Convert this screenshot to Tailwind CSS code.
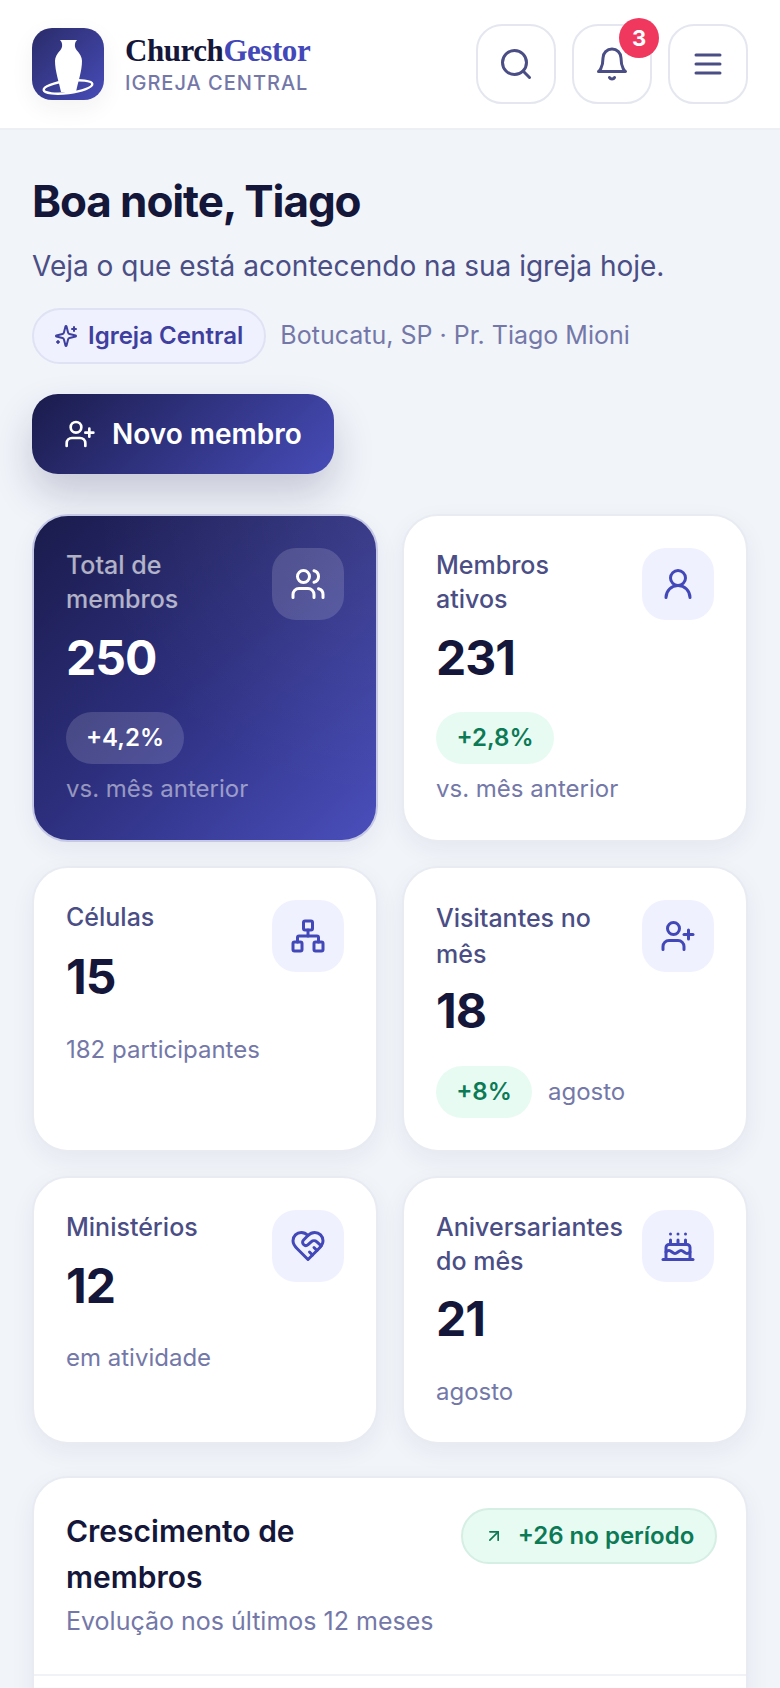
<!DOCTYPE html>
<html lang="pt-BR">
<head>
    <meta charset="UTF-8">
    <meta name="viewport" content="width=device-width, initial-scale=1.0">
    <title>ChurchGestor</title>
    <script src="https://cdn.jsdelivr.net/npm/@tailwindcss/browser@4"></script>
</head>
<body class="bg-[#f1f4f9] font-['Inter',sans-serif] text-[#14163a]">
<div class="h-[1688px] overflow-hidden">
    <!-- Header -->
    <header class="h-[130px] bg-white border-b-2 border-[#eceff4] px-8 flex items-center justify-between">
        <div class="flex items-center gap-[21px]">
            <div class="w-[72px] h-[72px] rounded-[20px] bg-[linear-gradient(135deg,#2a2b69,#474cb8)] shadow-[0_8px_24px_rgba(26,27,75,0.06)]">
                <svg viewBox="0 0 72 72" class="w-[72px] h-[72px]">
                    <ellipse cx="36" cy="59" rx="24.5" ry="6" transform="rotate(-7 36 59)" fill="none" stroke="white" stroke-width="2.4"/>
                    <path fill="white" d="M28 12H45L43.5 14C42.5 17 42.5 19 44.5 22C48 26 50 29 50 33C50 43 46 54 44 64H29C27 54 23 43 23 33C23 29 25 26 28.5 22C30.5 19 30.5 17 29.5 14Z"/>
                </svg>
            </div>
            <div>
                <div class="font-['Liberation_Serif',serif] font-bold text-[31px] leading-[36px] tracking-[-0.45px]">Church<span class="text-[#4348b8]">Gestor</span></div>
                <div class="text-[20px] leading-[26px] font-medium tracking-[1px] text-[#7478a8] mt-[1px]">IGREJA CENTRAL</div>
            </div>
        </div>
        <div class="flex gap-4">
            <button class="w-[80px] h-[80px] rounded-[26px] border-2 border-[#e4e7ef] flex items-center justify-center text-[#4a4e85]">
                <svg viewBox="0 0 24 24" class="w-9 h-9" fill="none" stroke="currentColor" stroke-width="2" stroke-linecap="round" stroke-linejoin="round"><circle cx="11" cy="11" r="8"/><path d="m21 21-4.3-4.3"/></svg>
            </button>
            <button class="relative w-[80px] h-[80px] rounded-[26px] border-2 border-[#e4e7ef] flex items-center justify-center text-[#4a4e85]">
                <svg viewBox="0 0 24 24" class="w-9 h-9" fill="none" stroke="currentColor" stroke-width="2" stroke-linecap="round" stroke-linejoin="round"><path d="M6 8a6 6 0 0 1 12 0c0 7 3 9 3 9H3s3-2 3-9"/><path d="M10.3 21a1.94 1.94 0 0 0 3.4 0"/></svg>
                <span class="absolute -top-[8px] -right-[9px] w-10 h-10 rounded-full bg-[#f0385f] text-white text-[22px] font-bold flex items-center justify-center">3</span>
            </button>
            <button class="w-[80px] h-[80px] rounded-[26px] border-2 border-[#e4e7ef] flex items-center justify-center text-[#4a4e85]">
                <svg viewBox="0 0 24 24" class="w-9 h-9" fill="none" stroke="currentColor" stroke-width="2" stroke-linecap="round" stroke-linejoin="round"><path d="M4 6h16"/><path d="M4 12h16"/><path d="M4 18h16"/></svg>
            </button>
        </div>
    </header>

    <main class="px-8 pt-[42px]">
        <h1 class="text-[44px] leading-[58px] font-bold tracking-[-1.1px]">Boa noite, Tiago</h1>
        <p class="text-[28px] leading-[40px] text-[#4a4e85] mt-[16px]">Veja o que está acontecendo na sua igreja hoje.</p>
        <div class="flex items-center gap-[14px] mt-[22px]">
            <span class="h-[56px] pl-[20px] pr-[21px] rounded-full bg-[#eff1fe] border-2 border-[#dfe2f3] flex items-center gap-[10px] text-[#3f3f9f] text-[24px] font-semibold">
                <svg viewBox="0 0 24 24" class="w-6 h-6" fill="none" stroke="currentColor" stroke-width="2" stroke-linecap="round" stroke-linejoin="round"><path d="M9.937 15.5A2 2 0 0 0 8.5 14.063l-6.135-1.582a.5.5 0 0 1 0-.962L8.5 9.936A2 2 0 0 0 9.937 8.5l1.582-6.135a.5.5 0 0 1 .963 0L14.063 8.5A2 2 0 0 0 15.5 9.937l6.135 1.581a.5.5 0 0 1 0 .964L15.5 14.063a2 2 0 0 0-1.437 1.437l-1.582 6.135a.5.5 0 0 1-.963 0z"/><path d="M20 3v4"/><path d="M22 5h-4"/><path d="M4 17v2"/><path d="M5 18H3"/></svg>
                Igreja Central
            </span>
            <span class="text-[25px] text-[#7478a8]">Botucatu, SP · Pr. Tiago Mioni</span>
        </div>
        <button class="mt-[30px] h-[80px] w-[302px] rounded-[26px] bg-[linear-gradient(135deg,#1a1b4b,#474cb8)] shadow-[0_20px_40px_rgba(26,27,75,0.2)] flex items-center gap-[16px] pl-[32px] text-white text-[28px] font-semibold">
            <svg viewBox="0 0 24 24" class="w-8 h-8" fill="none" stroke="currentColor" stroke-width="2" stroke-linecap="round" stroke-linejoin="round"><path d="M16 21v-2a4 4 0 0 0-4-4H6a4 4 0 0 0-4 4v2"/><circle cx="9" cy="7" r="4"/><path d="M19 8v6"/><path d="M22 11h-6"/></svg>
            Novo membro
        </button>

        <!-- Stat cards -->
        <div class="grid grid-cols-2 gap-6 mt-[40px]">
            <div class="relative overflow-hidden h-[328px] rounded-[36px] border-2 border-[#c5c9e6] bg-[linear-gradient(135deg,#1a1b4b,#2e3080_50%,#4a4fbc)] px-8 pt-[32px] shadow-[0_8px_24px_rgba(26,27,75,0.06)]">
                <div class="absolute inset-0 bg-[radial-gradient(circle_at_100%_0%,rgba(255,255,255,0.06),transparent_60%)]"></div>
                <div class="relative flex justify-between gap-4">
                    <div>
                        <div class="text-[25px] leading-[34px] font-medium text-white/65">Total de<br>membros</div>
                        <div class="text-[48px] leading-[62px] font-bold tracking-[-1px] text-white mt-[11px]">250</div>
                    </div>
                    <div class="shrink-0 w-[72px] h-[72px] rounded-[24px] bg-white/15 flex items-center justify-center text-white">
                        <svg viewBox="0 0 24 24" class="w-9 h-9" fill="none" stroke="currentColor" stroke-width="2" stroke-linecap="round" stroke-linejoin="round"><path d="M16 21v-2a4 4 0 0 0-4-4H6a4 4 0 0 0-4 4v2"/><circle cx="9" cy="7" r="4"/><path d="M22 21v-2a4 4 0 0 0-3-3.87"/><path d="M16 3.13a4 4 0 0 1 0 7.75"/></svg>
                    </div>
                </div>
                <div class="relative mt-[23px] w-[118px] h-[52px] rounded-full bg-white/15 flex items-center justify-center text-white text-[24px] font-semibold">+4,2%</div>
                <div class="relative text-[24px] leading-[32px] text-white/50 mt-[9px]">vs. mês anterior</div>
            </div>

            <div class="h-[328px] rounded-[36px] border-2 border-[#e8ebf2] bg-white px-8 pt-[32px] shadow-[0_8px_24px_rgba(26,27,75,0.06)]">
                <div class="flex justify-between gap-4">
                    <div>
                        <div class="text-[25px] leading-[34px] font-medium text-[#4a4e85]">Membros<br>ativos</div>
                        <div class="text-[48px] leading-[62px] font-bold tracking-[-1px] mt-[11px]">231</div>
                    </div>
                    <div class="shrink-0 w-[72px] h-[72px] rounded-[24px] bg-[#eff1fe] flex items-center justify-center text-[#4348b8]">
                        <svg viewBox="0 0 24 24" class="w-9 h-9" fill="none" stroke="currentColor" stroke-width="2" stroke-linecap="round" stroke-linejoin="round"><circle cx="12" cy="8" r="5"/><path d="M20 21a8 8 0 0 0-16 0"/></svg>
                    </div>
                </div>
                <div class="mt-[23px] w-[118px] h-[52px] rounded-full bg-[#e8fbf3] flex items-center justify-center text-[#0b7a55] text-[24px] font-semibold">+2,8%</div>
                <div class="text-[24px] leading-[32px] text-[#7478a8] mt-[9px]">vs. mês anterior</div>
            </div>

            <div class="h-[286px] rounded-[36px] border-2 border-[#e8ebf2] bg-white px-8 pt-[32px] shadow-[0_8px_24px_rgba(26,27,75,0.06)]">
                <div class="flex justify-between gap-4">
                    <div>
                        <div class="text-[25px] leading-[34px] font-medium text-[#4a4e85]">Células</div>
                        <div class="text-[48px] leading-[62px] font-bold tracking-[-1px] mt-[12px]">15</div>
                    </div>
                    <div class="shrink-0 w-[72px] h-[72px] rounded-[24px] bg-[#eff1fe] flex items-center justify-center text-[#4348b8]">
                        <svg viewBox="0 0 24 24" class="w-9 h-9" fill="none" stroke="currentColor" stroke-width="2" stroke-linecap="round" stroke-linejoin="round"><rect x="16" y="16" width="6" height="6" rx="1"/><rect x="2" y="16" width="6" height="6" rx="1"/><rect x="9" y="2" width="6" height="6" rx="1"/><path d="M5 16v-3a1 1 0 0 1 1-1h12a1 1 0 0 1 1 1v3"/><path d="M12 12V8"/></svg>
                    </div>
                </div>
                <div class="text-[24px] leading-[32px] text-[#7478a8] mt-[26px]">182 participantes</div>
            </div>

            <div class="h-[286px] rounded-[36px] border-2 border-[#e8ebf2] bg-white px-8 pt-[32px] shadow-[0_8px_24px_rgba(26,27,75,0.06)]">
                <div class="flex justify-between gap-4">
                    <div>
                        <div class="text-[25px] leading-[36px] font-medium text-[#4a4e85]">Visitantes no<br>mês</div>
                        <div class="text-[48px] leading-[62px] font-bold tracking-[-1px] mt-[8px]">18</div>
                    </div>
                    <div class="shrink-0 w-[72px] h-[72px] rounded-[24px] bg-[#eff1fe] flex items-center justify-center text-[#4348b8]">
                        <svg viewBox="0 0 24 24" class="w-9 h-9" fill="none" stroke="currentColor" stroke-width="2" stroke-linecap="round" stroke-linejoin="round"><path d="M16 21v-2a4 4 0 0 0-4-4H6a4 4 0 0 0-4 4v2"/><circle cx="9" cy="7" r="4"/><path d="M19 8v6"/><path d="M22 11h-6"/></svg>
                    </div>
                </div>
                <div class="flex items-center gap-[16px] mt-[24px]">
                    <div class="w-[96px] h-[52px] rounded-full bg-[#e8fbf3] flex items-center justify-center text-[#0b7a55] text-[24px] font-semibold">+8%</div>
                    <div class="text-[24px] leading-[32px] text-[#7478a8]">agosto</div>
                </div>
            </div>

            <div class="h-[268px] rounded-[36px] border-2 border-[#e8ebf2] bg-white px-8 pt-[32px] shadow-[0_8px_24px_rgba(26,27,75,0.06)]">
                <div class="flex justify-between gap-4">
                    <div>
                        <div class="text-[25px] leading-[34px] font-medium text-[#4a4e85]">Ministérios</div>
                        <div class="text-[48px] leading-[62px] font-bold tracking-[-1px] mt-[11px]">12</div>
                    </div>
                    <div class="shrink-0 w-[72px] h-[72px] rounded-[24px] bg-[#eff1fe] flex items-center justify-center text-[#4348b8]">
                        <svg viewBox="0 0 24 24" class="w-9 h-9" fill="none" stroke="currentColor" stroke-width="2" stroke-linecap="round" stroke-linejoin="round"><path d="M19 14c1.49-1.46 3-3.21 3-5.5A5.5 5.5 0 0 0 16.5 3c-1.76 0-3 .5-4.5 2-1.5-1.5-2.74-2-4.5-2A5.5 5.5 0 0 0 2 8.5c0 2.3 1.5 4.05 3 5.5l7 7Z"/><path d="M12 5 9.04 7.96a2.17 2.17 0 0 0 0 3.08c.82.82 2.13.85 3 .07l2.07-1.9a2.82 2.82 0 0 1 3.79 0l2.96 2.66"/><path d="m18 15-2-2"/><path d="m15 18-2-2"/></svg>
                    </div>
                </div>
                <div class="text-[24px] leading-[32px] text-[#7478a8] mt-[25px]">em atividade</div>
            </div>

            <div class="h-[268px] rounded-[36px] border-2 border-[#e8ebf2] bg-white px-8 pt-[32px] shadow-[0_8px_24px_rgba(26,27,75,0.06)]">
                <div class="flex justify-between gap-4">
                    <div>
                        <div class="text-[25px] leading-[34px] font-medium text-[#4a4e85]">Aniversariantes<br>do mês</div>
                        <div class="text-[48px] leading-[62px] font-bold tracking-[-1px] mt-[10px]">21</div>
                    </div>
                    <div class="shrink-0 w-[72px] h-[72px] rounded-[24px] bg-[#eff1fe] flex items-center justify-center text-[#4348b8]">
                        <svg viewBox="0 0 24 24" class="w-9 h-9" fill="none" stroke="currentColor" stroke-width="2" stroke-linecap="round" stroke-linejoin="round"><path d="M20 21v-8a2 2 0 0 0-2-2H6a2 2 0 0 0-2 2v8"/><path d="M4 16s.5-1 2-1 2.5 2 4 2 2.5-2 4-2 2.5 2 4 2 2-1 2-1"/><path d="M2 21h20"/><path d="M7 8v3"/><path d="M12 8v3"/><path d="M17 8v3"/><path d="M7 4h.01"/><path d="M12 4h.01"/><path d="M17 4h.01"/></svg>
                    </div>
                </div>
                <div class="text-[24px] leading-[32px] text-[#7478a8] mt-[26px]">agosto</div>
            </div>
        </div>

        <!-- Crescimento -->
        <section class="mt-[32px] rounded-t-[36px] border-2 border-[#e8ebf2] bg-white shadow-[0_8px_24px_rgba(26,27,75,0.06)]">
            <div class="h-[198px] pl-8 pr-[29px] pt-[30px] flex justify-between gap-4 border-b-2 border-[#f0f2f6]">
                <div class="min-w-0">
                    <h2 class="text-[30px] leading-[46px] font-semibold w-[260px]">Crescimento de membros</h2>
                    <p class="text-[25px] leading-[34px] text-[#7478a8] mt-[4px] whitespace-nowrap">Evolução nos últimos 12 meses</p>
                </div>
                <div class="shrink-0 w-[256px] h-[56px] rounded-full bg-[#e8fbf3] border-2 border-[#d5efe4] flex items-center justify-center gap-[14px] text-[#0b7a55] text-[24px] font-semibold">
                    <svg viewBox="0 0 24 24" class="w-5 h-5" fill="none" stroke="currentColor" stroke-width="2" stroke-linecap="round" stroke-linejoin="round"><path d="M7 7h10v10"/><path d="M7 17 17 7"/></svg>
                    +26 no período
                </div>
            </div>
            <div class="h-[100px]"></div>
        </section>
    </main>
</div>
</body>
</html>
